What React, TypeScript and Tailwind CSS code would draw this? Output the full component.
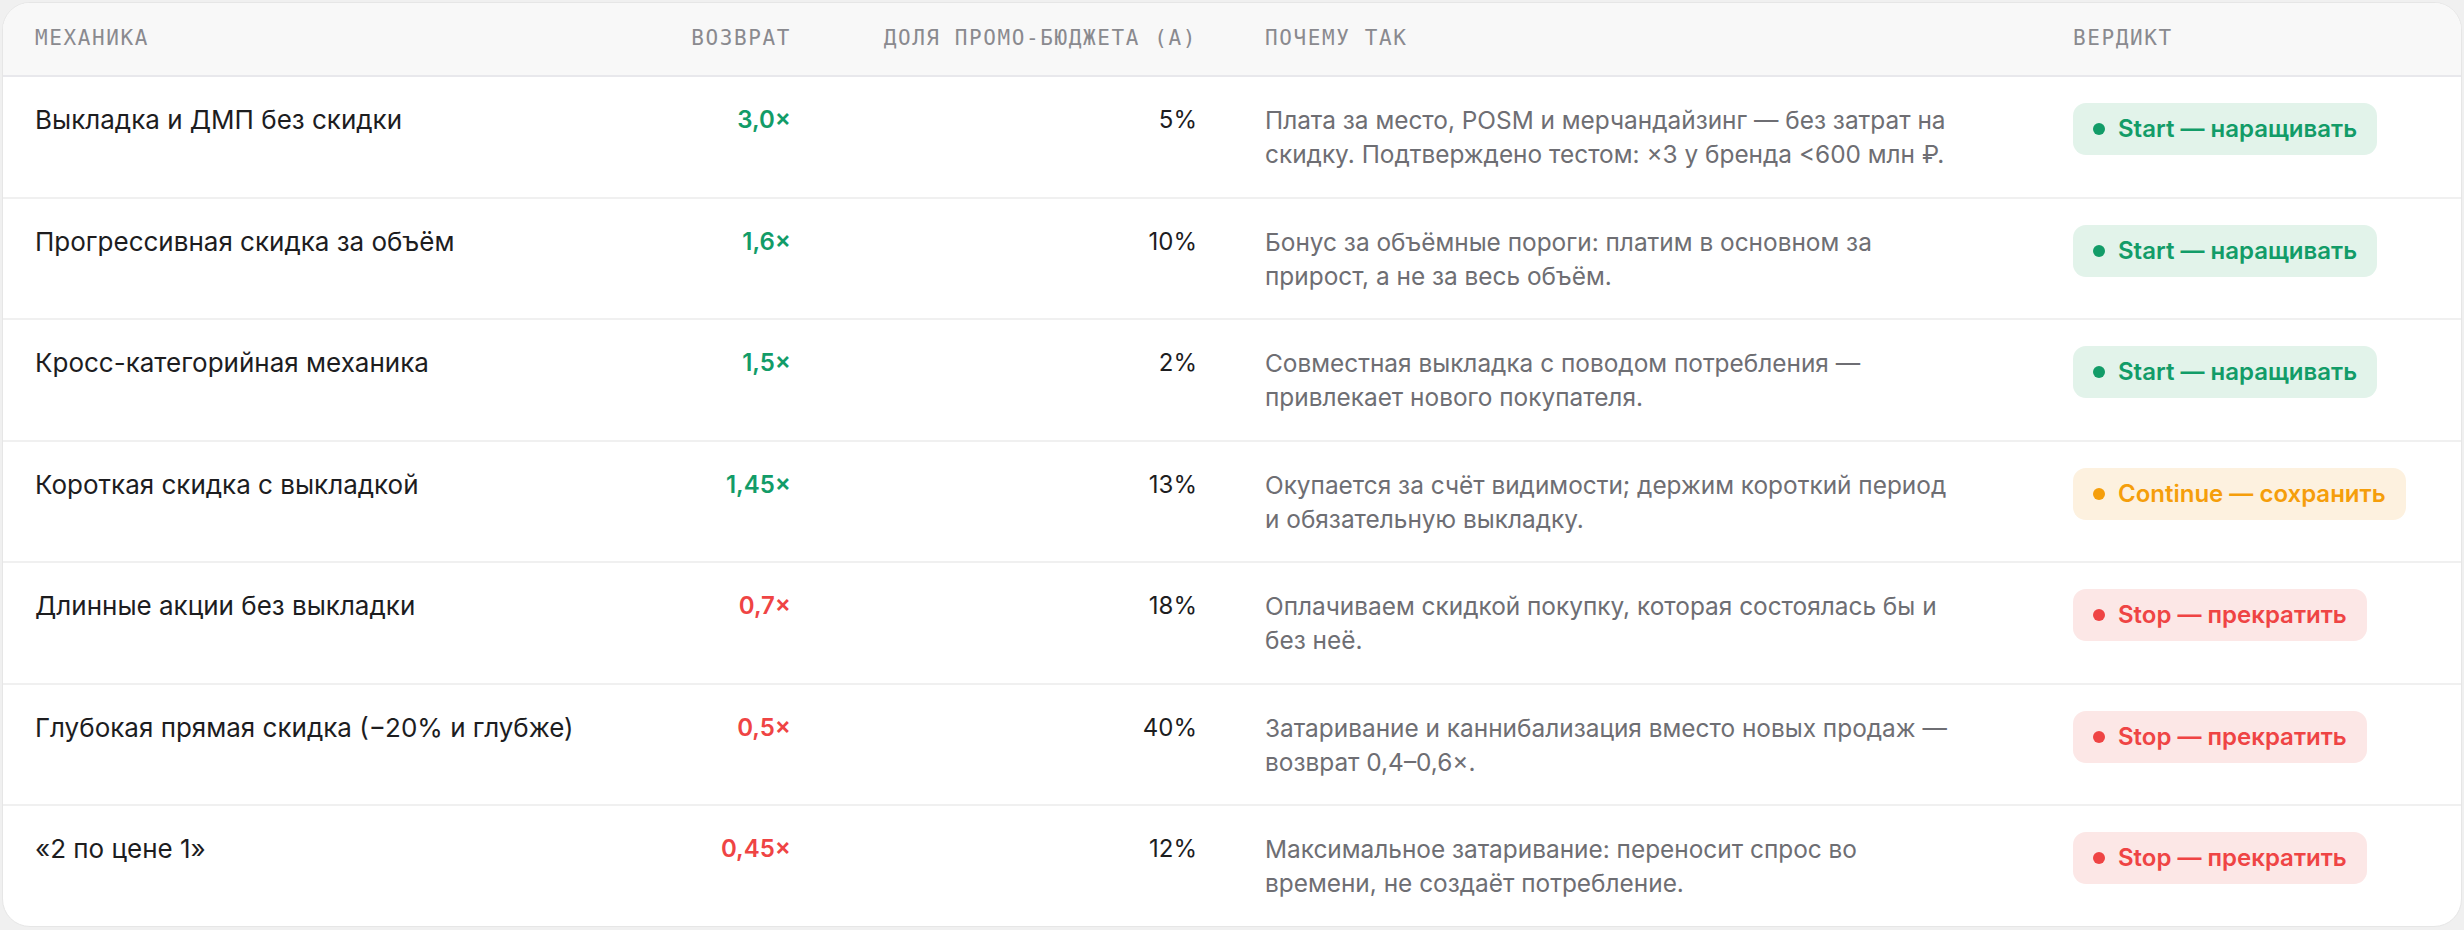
import React from 'react';

type Verdict = 'start' | 'continue' | 'stop';

interface Row {
  name: string;
  ret: string;
  good: boolean;
  share: string;
  why: [string, string];
  verdict: Verdict;
}

// "why" is split by hand so the lines break where they do in the design
const ROWS: Row[] = [
  {
    name: 'Выкладка и ДМП без скидки',
    ret: '3,0×',
    good: true,
    share: '5%',
    why: ['Плата за место, POSM и мерчандайзинг — без затрат на', 'скидку. Подтверждено тестом: ×3 у бренда <600 млн ₽.'],
    verdict: 'start',
  },
  {
    name: 'Прогрессивная скидка за объём',
    ret: '1,6×',
    good: true,
    share: '10%',
    why: ['Бонус за объёмные пороги: платим в основном за', 'прирост, а не за весь объём.'],
    verdict: 'start',
  },
  {
    name: 'Кросс-категорийная механика',
    ret: '1,5×',
    good: true,
    share: '2%',
    why: ['Совместная выкладка с поводом потребления —', 'привлекает нового покупателя.'],
    verdict: 'start',
  },
  {
    name: 'Короткая скидка с выкладкой',
    ret: '1,45×',
    good: true,
    share: '13%',
    why: ['Окупается за счёт видимости; держим короткий период', 'и обязательную выкладку.'],
    verdict: 'continue',
  },
  {
    name: 'Длинные акции без выкладки',
    ret: '0,7×',
    good: false,
    share: '18%',
    why: ['Оплачиваем скидкой покупку, которая состоялась бы и', 'без неё.'],
    verdict: 'stop',
  },
  {
    name: 'Глубокая прямая скидка (−20% и глубже)',
    ret: '0,5×',
    good: false,
    share: '40%',
    why: ['Затаривание и каннибализация вместо новых продаж —', 'возврат 0,4–0,6×.'],
    verdict: 'stop',
  },
  {
    name: '«2 по цене 1»',
    ret: '0,45×',
    good: false,
    share: '12%',
    why: ['Максимальное затаривание: переносит спрос во', 'времени, не создаёт потребление.'],
    verdict: 'stop',
  },
];

const VERDICTS: Record<Verdict, { label: string; box: string; dot: string }> = {
  start: { label: 'Start — наращивать', box: 'bg-[#e2f3ea] text-[#129c68]', dot: 'bg-[#129c68]' },
  continue: { label: 'Continue — сохранить', box: 'bg-[#fdf1df] text-[#f59e0b]', dot: 'bg-[#f59e0b]' },
  stop: { label: 'Stop — прекратить', box: 'bg-[#fce7e6] text-[#ef4444]', dot: 'bg-[#ef4444]' },
};

const GRID = 'grid grid-cols-[617px_205px_406px_808px_1fr]';

const Badge: React.FC<{ verdict: Verdict }> = ({ verdict }) => {
  const v = VERDICTS[verdict];
  return (
    <span className={`inline-flex items-center gap-[13px] h-[52px] pl-[20px] pr-[20px] rounded-[13px] text-[24px] font-semibold ${v.box}`}>
      <span className={`w-[12px] h-[12px] rounded-full ${v.dot}`} />
      {v.label}
    </span>
  );
};

export default function App() {
  return (
    <div className="w-[2464px] h-[930px] bg-[#f0f0f0] p-[2px] font-['Inter','Noto_Sans',sans-serif]">
      <div className="bg-white border border-[#e6e6e6] rounded-[28px] overflow-hidden">
        {/* header */}
        <div
          className={`${GRID} h-[74px] items-center bg-[#f8f8f8] border-b-2 border-[#e8e8ec] font-['DejaVu_Sans_Mono',monospace] text-[21px] tracking-[1.6px] text-[#8a8a8f] uppercase`}
        >
          <div className="pl-[32px]">Механика</div>
          <div className="pr-[34px] text-right">Возврат</div>
          <div className="pr-[34px] text-right">Доля промо-бюджета (А)</div>
          <div className="pl-[34px]">Почему так</div>
          <div className="pl-[34px]">Вердикт</div>
        </div>

        {ROWS.map((r, i) => (
          <div
            key={r.name}
            className={`${GRID} items-start pt-[26px] pb-[25.5px] leading-[34px] ${i < ROWS.length - 1 ? 'border-b-2 border-[#f0f0f0]' : ''}`}
          >
            <div className="pl-[32px] pr-[20px] text-[26px] text-[#1d1d1f]">{r.name}</div>
            <div className={`pr-[34px] text-right text-[24px] font-semibold ${r.good ? 'text-[#129c68]' : 'text-[#ef4444]'}`}>
              {r.ret}
            </div>
            <div className="pr-[34px] text-right text-[24px] text-[#1d1d1f]">{r.share}</div>
            <div className="px-[34px] text-[24.4px] text-[#6e6e73] whitespace-nowrap">
              <div>{r.why[0]}</div>
              <div>{r.why[1]}</div>
            </div>
            <div className="pl-[34px]">
              <Badge verdict={r.verdict} />
            </div>
          </div>
        ))}
      </div>
    </div>
  );
}
